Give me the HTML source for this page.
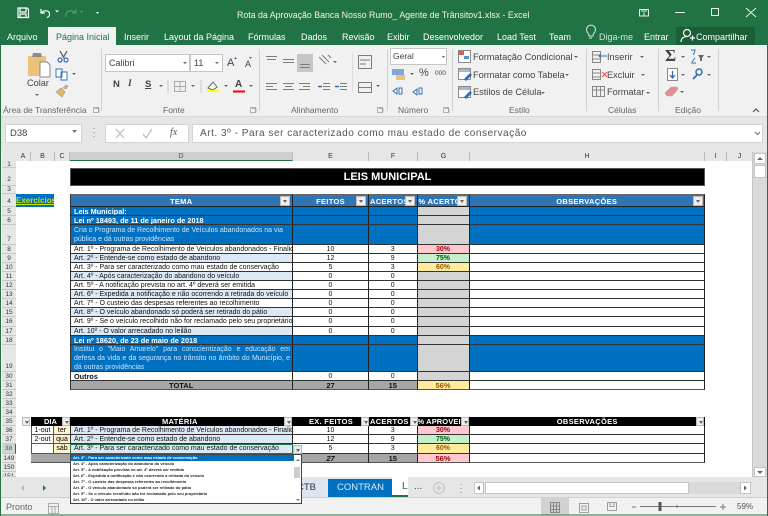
<!DOCTYPE html>
<html lang="pt"><head><meta charset="utf-8"><title>Excel</title>
<style>
*{box-sizing:border-box}
html,body{margin:0;padding:0}
body{width:768px;height:516px;overflow:hidden;background:#fff;font-family:"Liberation Sans",sans-serif;position:relative;filter:blur(.35px)}
div{position:absolute;white-space:nowrap}
.b{background:#f1f1f1}
.t{font-size:9px;color:#fff;top:29px;line-height:16px}
.rb{font-size:9.2px;color:#444;line-height:14px}
.gl{font-size:8.5px;color:#666;top:103px;line-height:14px}
.rh{left:2px;width:14px;background:#e6e6e6;border-bottom:1px solid #c8c8c8;font-size:6.5px;color:#333;text-align:center;overflow:hidden}
.ch{top:152px;height:9px;background:#e6e6e6;border-right:1px solid #bbb;font-size:7px;line-height:10px;color:#333;text-align:center}
.r{left:70px;width:635px}
.r>div{top:0;height:100%;border-right:1px solid #222;border-bottom:1px solid #333;font-size:7px;color:#111;overflow:hidden;text-align:center;line-height:9px}
.d{left:0;width:223px;border-left:1px solid #333;text-align:left!important;padding-left:3px}
.e{left:223px;width:76px}
.f{left:299px;width:48.5px}
.g{left:347.5px;width:52px;background:#d4d4d4}
.h{left:399.5px;width:235.5px}
.bl>div{background:#0070c0;color:#fff}
.bl>.g{background:#d4d4d4}
.bo{font-weight:bold;font-size:7.3px!important}
.lt{background:#dce9f5}
.hd>div{background:#2e75b6;color:#fff;font-weight:bold;font-size:7.5px;line-height:13px;letter-spacing:.3px;border-top:1px solid #666;border-bottom:1px solid #222}
.k>div{background:#000;color:#fff;font-weight:bold;font-size:7.5px;line-height:10px;letter-spacing:.3px;border:0}
.fb{width:8px;height:9px;background:#eee;border:1px solid #bbb}
.fb:after{content:"";position:absolute;left:1.5px;top:2.5px;border:2px solid transparent;border-top:3px solid #666}
.pk{background:#ffc7ce!important;color:#9c0006!important;font-weight:bold}
.gr{background:#c6efce!important;color:#006100!important;font-weight:bold}
.yl{background:#ffeb9c!important;color:#9c5700!important;font-weight:bold}
.to>div{background:#a6a6a6;font-weight:bold;font-size:7.5px;line-height:9px;border-bottom:1px solid #555}
.wh{background:#fff!important}
.li{left:73px;font-size:4px;font-weight:bold;color:#222;line-height:6px;height:6px}
</style></head><body>
<div style="left:0;top:0;width:768px;height:27px;background:#217346"></div>
<div style="left:0;top:27px;width:768px;height:18px;background:#217346"></div>
<div class="t" style="left:237px;top:7px;font-size:8.8px;color:#f2f2f2">Rota da Aprovação Banca Nosso Rumo_ Agente de Trânsitov1.xlsx - Excel</div>
<div style="left:48px;top:27px;width:68px;height:19px;background:#f1f1f1"></div>
<div class="t" style="left:7px">Arquivo</div>
<div class="t" style="left:56px;color:#217346">Página Inicial</div>
<div class="t" style="left:124px">Inserir</div>
<div class="t" style="left:164px">Layout da Página</div>
<div class="t" style="left:248px">Fórmulas</div>
<div class="t" style="left:301px">Dados</div>
<div class="t" style="left:342px">Revisão</div>
<div class="t" style="left:387px">Exibir</div>
<div class="t" style="left:423px">Desenvolvedor</div>
<div class="t" style="left:497px">Load Test</div>
<div class="t" style="left:549px">Team</div>
<div class="t" style="left:599px;color:#cfe3d7">Diga-me</div>
<div class="t" style="left:644px">Entrar</div>
<div style="left:676px;top:27px;width:79px;height:18px;background:#1b5e38"></div>
<div class="t" style="left:696px">Compartilhar</div>

<div class="b" style="left:1px;top:45px;width:766px;height:71px"></div>
<div style="left:1px;top:116px;width:766px;height:36px;background:#e6e6e6"></div>
<div style="left:1px;top:116px;width:766px;height:1px;background:#d8d8d8"></div>

<div style="left:105px;top:54px;width:85px;height:18px;background:#fff;border:1px solid #c6c6c6;font-size:9px;color:#444;line-height:16px;padding-left:3px">Calibri</div>
<div style="left:190px;top:54px;width:33px;height:18px;background:#fff;border:1px solid #c6c6c6;font-size:9px;color:#444;line-height:16px;padding-left:3px">11</div>
<div style="left:297px;top:54px;width:16px;height:18px;background:#c6c6c6"></div>
<div style="left:390px;top:48px;width:57px;height:17px;background:#fff;border:1px solid #c6c6c6;font-size:8.5px;color:#444;line-height:15px;padding-left:2px">Geral</div>
<div class="rb" style="left:27px;top:76px">Colar</div>
<div style="left:113px;top:79px;font-size:9.5px;font-weight:bold;color:#444">N</div>
<div style="left:128px;top:79px;font-size:9.5px;font-style:italic;font-family:'Liberation Serif',serif;font-weight:bold;color:#444">I</div>
<div style="left:145px;top:79px;font-size:9.5px;font-weight:bold;color:#444;text-decoration:underline">S</div>
<div style="left:227px;top:57px;font-size:11px;color:#444">A</div>
<div style="left:245px;top:59px;font-size:9px;color:#444">A</div>
<div style="left:235px;top:79px;font-size:10px;font-weight:bold;color:#444">A</div>
<div style="left:419px;top:67px;font-size:11px;color:#444">%</div>
<div style="left:435px;top:70px;font-size:6.5px;color:#444">000</div>
<div class="rb" style="left:473px;top:50px">Formatação Condicional</div>
<div class="rb" style="left:473px;top:68px">Formatar como Tabela</div>
<div class="rb" style="left:473px;top:85px">Estilos de Célula</div>
<div class="rb" style="left:607px;top:50px">Inserir</div>
<div class="rb" style="left:607px;top:68px">Excluir</div>
<div class="rb" style="left:607px;top:85px">Formatar</div>
<div style="left:665px;top:46px;font-size:17px;color:#444;font-family:'Liberation Serif',serif;font-weight:bold;line-height:20px">Σ</div>
<div class="gl" style="left:3px">Área de Transferência</div>
<div class="gl" style="left:163px">Fonte</div>
<div class="gl" style="left:291px">Alinhamento</div>
<div class="gl" style="left:398px">Número</div>
<div class="gl" style="left:509px">Estilo</div>
<div class="gl" style="left:608px">Células</div>
<div class="gl" style="left:675px">Edição</div>

<div style="left:5px;top:124px;width:77px;height:19px;background:#fff;border:1px solid #d4d4d4;font-size:9.5px;line-height:17px;padding-left:4px;color:#444">D38</div>
<div style="left:105px;top:124px;width:84px;height:19px;background:#fff;border:1px solid #d4d4d4"></div>
<div style="left:170px;top:125px;font-size:10px;font-family:'Liberation Serif',serif;font-style:italic;line-height:16px;color:#555">fx</div>
<div style="left:192px;top:124px;width:571px;height:19px;background:#fff;border:1px solid #d4d4d4;font-size:10.1px;letter-spacing:.5px;line-height:17px;padding-left:7px;color:#555">Art. 3º - Para ser caracterizado como mau estado de conservação</div>

<div style="left:2px;top:152px;width:14px;height:9px;background:#e6e6e6"></div>
<div class="ch" style="left:16px;width:15px">A</div>
<div class="ch" style="left:31px;width:24px">B</div>
<div class="ch" style="left:55px;width:15px">C</div>
<div class="ch" style="left:70px;width:223px;background:#cfcfcf;border-bottom:1px solid #217346;color:#217346">D</div>
<div class="ch" style="left:293px;width:76px">E</div>
<div class="ch" style="left:369px;width:49px">F</div>
<div class="ch" style="left:418px;width:52px">G</div>
<div class="ch" style="left:470px;width:235px">H</div>
<div class="ch" style="left:705px;width:22px">I</div>
<div class="ch" style="left:727px;width:26px">J</div>

<div class="rh" style="top:161px;height:7px;line-height:7px">1</div>
<div class="rh" style="top:168px;height:18px;line-height:24px">2</div>
<div class="rh" style="top:186px;height:8px;line-height:8px">3</div>
<div class="rh" style="top:194px;height:13px;line-height:16px">4</div>
<div class="rh" style="top:207px;height:9px;line-height:9px">5</div>
<div class="rh" style="top:216px;height:9px;line-height:9px">6</div>
<div class="rh" style="top:225px;height:20px;line-height:30px">7</div>
<div class="rh" style="top:245px;height:9px;line-height:9px">8</div>
<div class="rh" style="top:254px;height:9px;line-height:9px">9</div>
<div class="rh" style="top:263px;height:9px;line-height:9px">10</div>
<div class="rh" style="top:272px;height:9px;line-height:9px">11</div>
<div class="rh" style="top:281px;height:9px;line-height:9px">12</div>
<div class="rh" style="top:290px;height:9px;line-height:9px">13</div>
<div class="rh" style="top:299px;height:9px;line-height:9px">14</div>
<div class="rh" style="top:308px;height:9px;line-height:9px">15</div>
<div class="rh" style="top:317px;height:10px;line-height:10px">16</div>
<div class="rh" style="top:327px;height:9px;line-height:9px">17</div>
<div class="rh" style="top:336px;height:9px;line-height:9px">18</div>
<div class="rh" style="top:345px;height:27px;line-height:44px">19</div>
<div class="rh" style="top:372px;height:9px;line-height:9px">30</div>
<div class="rh" style="top:381px;height:9px;line-height:9px">31</div>
<div class="rh" style="top:390px;height:9px;line-height:9px">32</div>
<div class="rh" style="top:399px;height:9px;line-height:9px">33</div>
<div class="rh" style="top:408px;height:9px;line-height:9px">34</div>
<div class="rh" style="top:417px;height:9px;line-height:9px">35</div>
<div class="rh" style="top:426px;height:9px;line-height:9px">36</div>
<div class="rh" style="top:435px;height:9px;line-height:9px">37</div>
<div class="rh" style="top:444px;height:10px;line-height:10px;background:#cfd6d2;color:#217346;border-right:1px solid #217346">38</div>
<div class="rh" style="top:454px;height:9px;line-height:9px">149</div>
<div class="rh" style="top:463px;height:9px;line-height:9px">150</div>
<div class="rh" style="top:472px;height:5px;line-height:9px">151</div>

<div style="left:70px;top:168px;width:635px;height:18px;background:#000;border:1px solid #555;color:#fff;font-weight:bold;font-size:11px;line-height:16px;text-align:center">LEIS MUNICIPAL</div>
<div style="left:16px;top:194px;width:38px;height:13px;background:#0070c0;color:#c8e000;font-weight:bold;font-size:8px;line-height:13px;text-decoration:underline;overflow:hidden">Exercícios</div>

<div class="r hd" style="top:194px;height:13px"><div class="d" style="padding:0"><span style="position:absolute;left:99px">TEMA</span></div><div class="e">FEITOS</div><div class="f" style="text-align:left;padding-left:1px">ACERTOS</div><div class="g" style="background:#2e75b6;text-align:left;padding-left:1px">% ACERTOS</div><div class="h">OBSERVAÇÕES</div></div>
<div class="fb" style="left:280px;top:196px;height:10px;width:10px"></div>
<div class="fb" style="left:356px;top:196px;height:10px;width:10px"></div>
<div class="fb" style="left:405px;top:196px;height:10px;width:10px"></div>
<div class="fb" style="left:457px;top:196px;height:10px;width:10px"></div>
<div class="fb" style="left:693px;top:196px;height:10px;width:10px"></div>

<div class="r bl" style="top:207px;height:9px"><div class="d bo">Leis Municipal:</div><div class="e"></div><div class="f"></div><div class="g"></div><div class="h"></div></div>
<div class="r bl" style="top:216px;height:9px"><div class="d bo">Lei nº 18493, de 11 de janeiro de 2018</div><div class="e"></div><div class="f"></div><div class="g"></div><div class="h"></div></div>
<div class="r bl" style="top:225px;height:20px"><div class="d" style="padding-top:1px;color:#cfe4f7">Cria o Programa de Recolhimento de Veículos abandonados na via<br>pública e dá outras providências</div><div class="e"></div><div class="f"></div><div class="g"></div><div class="h"></div></div>
<div class="r" style="top:245px;height:9px"><div class="d wh">Art. 1º - Programa de Recolhimento de Veículos abandonados - Finalidade</div><div class="e">10</div><div class="f">3</div><div class="g pk">30%</div><div class="h"></div></div>
<div class="r" style="top:254px;height:9px"><div class="d lt">Art. 2º - Entende-se como estado de abandono</div><div class="e">12</div><div class="f">9</div><div class="g gr">75%</div><div class="h"></div></div>
<div class="r" style="top:263px;height:9px"><div class="d">Art. 3º - Para ser caracterizado como mau estado de conservação</div><div class="e">5</div><div class="f">3</div><div class="g yl">60%</div><div class="h"></div></div>
<div class="r" style="top:272px;height:9px"><div class="d lt">Art. 4º - Após caracterização do abandono do veículo</div><div class="e">0</div><div class="f">0</div><div class="g"></div><div class="h"></div></div>
<div class="r" style="top:281px;height:9px"><div class="d">Art. 5º - A notificação prevista no art. 4º deverá ser emitida</div><div class="e">0</div><div class="f">0</div><div class="g"></div><div class="h"></div></div>
<div class="r" style="top:290px;height:9px"><div class="d lt">Art. 6º - Expedida a notificação e não ocorrendo a retirada do veículo</div><div class="e">0</div><div class="f">0</div><div class="g"></div><div class="h"></div></div>
<div class="r" style="top:299px;height:9px"><div class="d">Art. 7º - O custeio das despesas referentes ao recolhimento</div><div class="e">0</div><div class="f">0</div><div class="g"></div><div class="h"></div></div>
<div class="r" style="top:308px;height:9px"><div class="d lt">Art. 8º - O veículo abandonado só poderá ser retirado do pátio</div><div class="e">0</div><div class="f">0</div><div class="g"></div><div class="h"></div></div>
<div class="r" style="top:317px;height:10px"><div class="d">Art. 9º - Se o veículo recolhido não for reclamado pelo seu proprietário</div><div class="e">0</div><div class="f">0</div><div class="g"></div><div class="h"></div></div>
<div class="r" style="top:327px;height:9px"><div class="d lt">Art. 10º - O valor arrecadado no leilão</div><div class="e">0</div><div class="f">0</div><div class="g"></div><div class="h"></div></div>
<div class="r bl" style="top:336px;height:9px"><div class="d bo">Lei nº 18620, de 23 de maio de 2018</div><div class="e"></div><div class="f"></div><div class="g"></div><div class="h"></div></div>
<div class="r bl" style="top:345px;height:27px"><div class="d" style="color:#cfe4f7"><span style="position:absolute;left:3px;top:0;width:216px;display:block;white-space:normal;text-align:justify">Institui o "Maio Amarelo" para conscientização e educação em defesa da vida e da segurança no trânsito no âmbito do Município, e dá outras providências</span></div><div class="e"></div><div class="f"></div><div class="g"></div><div class="h"></div></div>
<div class="r" style="top:372px;height:9px"><div class="d bo">Outros</div><div class="e">0</div><div class="f">0</div><div class="g"></div><div class="h"></div></div>
<div class="r to" style="top:381px;height:9px"><div class="d" style="padding:0"><span style="position:absolute;left:98px">TOTAL</span></div><div class="e">27</div><div class="f">15</div><div class="g yl">56%</div><div class="h wh"></div></div>

<div class="fb" style="left:22px;top:417px"></div>
<div style="left:31px;top:417px;width:39px;height:9px;background:#000;color:#fff;font-weight:bold;font-size:7.5px;line-height:10px;padding-left:13px">DIA</div>
<div class="r k" style="top:417px;height:9px"><div class="d" style="padding:0"><span style="position:absolute;left:92px">MATÉRIA</span></div><div class="e">EX. FEITOS</div><div class="f" style="text-align:left;padding-left:1px">ACERTOS</div><div class="g" style="background:#000;text-align:left;padding-left:0;letter-spacing:.1px">% APROVEI</div><div class="h">OBSERVAÇÕES</div></div>
<div class="fb" style="left:62px;top:417px"></div>
<div class="fb" style="left:284px;top:417px"></div>
<div class="fb" style="left:361px;top:417px"></div>
<div class="fb" style="left:410px;top:417px"></div>
<div class="fb" style="left:461px;top:417px"></div>
<div class="fb" style="left:696px;top:417px"></div>

<div style="left:31px;top:426px;width:23px;height:9px;border:1px solid #555;border-top:0;font-size:7px;line-height:9px;text-align:center">1-out</div>
<div style="left:54px;top:426px;width:16px;height:9px;background:#fff2cc;border-bottom:1px solid #555;font-size:7px;line-height:9px;text-align:center;overflow:hidden">ter</div>
<div style="left:31px;top:435px;width:23px;height:9px;border:1px solid #555;border-top:0;font-size:7px;line-height:9px;text-align:center">2-out</div>
<div style="left:54px;top:435px;width:16px;height:9px;background:#fff2cc;border-bottom:1px solid #555;font-size:7px;line-height:9px;text-align:center;overflow:hidden">qua</div>
<div style="left:31px;top:444px;width:23px;height:10px;border:1px solid #555;border-top:0"></div>
<div style="left:54px;top:444px;width:16px;height:10px;background:#fff2cc;border-bottom:1px solid #555;font-size:7px;line-height:10px;text-align:center;overflow:hidden">sáb</div>
<div style="left:31px;top:454px;width:39px;height:9px;background:#a6a6a6;border-bottom:1px solid #555"></div>

<div class="r" style="top:426px;height:9px"><div class="d lt">Art. 1º - Programa de Recolhimento de Veículos abandonados - Finalidade</div><div class="e">10</div><div class="f">3</div><div class="g pk">30%</div><div class="h"></div></div>
<div class="r" style="top:435px;height:9px"><div class="d lt">Art. 2º - Entende-se como estado de abandono</div><div class="e">12</div><div class="f">9</div><div class="g gr">75%</div><div class="h"></div></div>
<div class="r" style="top:444px;height:10px"><div class="d lt">Art. 3º - Para ser caracterizado como mau estado de conservação</div><div class="e">5</div><div class="f">3</div><div class="g yl">60%</div><div class="h"></div></div>
<div class="r to" style="top:454px;height:9px"><div class="d"></div><div class="e"><i>27</i></div><div class="f">15</div><div class="g pk">56%</div><div class="h wh"></div></div>
<div style="left:70px;top:444px;width:223px;height:10px;border:1px solid #217346"></div>

<div style="left:0;top:477px;width:768px;height:20px;background:#e6e6e6"></div>
<div style="left:0;top:497px;width:768px;height:19px;background:#f1f1f1;border-top:1px solid #d0d0d0"></div>
<div style="left:293px;top:479px;width:33px;height:18px;background:#dce6f1;color:#333;font-size:9.5px;line-height:17px;padding-left:4px">CTB</div>
<div style="left:328px;top:479px;width:64px;height:18px;background:#0070c0;color:#dcebf7;font-size:9.5px;line-height:17px;padding-left:9px">CONTRAN</div>
<div style="left:392px;top:477px;width:16px;height:20px;background:#fff;border-bottom:2px solid #217346;color:#217346;font-size:10.5px;line-height:19px;padding-left:10px;overflow:hidden">L</div>
<div style="left:414px;top:481px;font-size:10px;color:#444;line-height:12px">...</div>
<div style="left:474px;top:482px;width:10px;height:12px;background:#fff;border:1px solid #c4c4c4"></div>
<div style="left:485px;top:482px;width:204px;height:12px;background:#fff;border:1px solid #c4c4c4"></div>
<div style="left:689px;top:482px;width:51px;height:12px;background:#d9d9d9"></div>
<div style="left:740px;top:482px;width:11px;height:12px;background:#fff;border:1px solid #c4c4c4"></div>
<div style="left:6px;top:500px;font-size:9px;color:#666;line-height:14px">Pronto</div>
<div style="left:541px;top:497px;width:28px;height:18px;background:#d2d2d2"></div>
<div style="left:737px;top:500px;font-size:8px;color:#555;line-height:14px">59%</div>

<div style="left:752px;top:152px;width:15px;height:325px;background:#dadada;border-left:1px solid #c4c4c4"></div>
<div style="left:754px;top:153px;width:12px;height:11px;background:#fff;border:1px solid #c4c4c4"></div>
<div style="left:754px;top:165px;width:12px;height:13px;background:#fff;border:1px solid #c4c4c4"></div>
<div style="left:754px;top:467px;width:12px;height:10px;background:#fff;border:1px solid #c4c4c4"></div>

<div style="left:70px;top:454px;width:232px;height:50px;background:#fff;border:1px solid #444"></div>
<div style="left:71px;top:455px;width:223px;height:5.5px;background:#0070c0"></div>
<div class="li" style="top:454.5px;color:#fff">Art. 3º - Para ser caracterizado como mau estado de conservação</div>
<div class="li" style="top:460.5px">Art. 4º - Após caracterização do abandono do veículo</div>
<div class="li" style="top:466.8px">Art. 5º - A notificação prevista no art. 4º deverá ser emitida</div>
<div class="li" style="top:472.8px">Art. 6º - Expedida a notificação e não ocorrendo a retirada do veículo</div>
<div class="li" style="top:479px">Art. 7º - O custeio das despesas referentes ao recolhimento</div>
<div class="li" style="top:485px">Art. 8º - O veículo abandonado só poderá ser retirado do pátio</div>
<div class="li" style="top:491.2px">Art. 9º - Se o veículo recolhido não for reclamado pelo seu proprietário</div>
<div class="li" style="top:497.3px">Art. 10º - O valor arrecadado no leilão</div>
<div style="left:294px;top:467px;width:6px;height:11px;background:#cdcdcd"></div>
<div class="fb" style="left:293px;top:445px;height:9px;width:9px;background:#e8e8e8"></div>

<svg width="768" height="516" viewBox="0 0 768 516" style="position:absolute;left:0;top:0" fill="none">
<g stroke="#fff" stroke-width="1.2">
<path d="M18 8h9l1.500 1.500V17.500H18zM20 8v4h6V8M20 17.500v-3.500h6v3.500"/>
<path d="M41 9v4h4M41.500 13C43 10 49 10 49.500 13.500c.3 2-1 3.500-2.500 4"/>
</g>
<path d="M66 17c-1-4 2-7 6-6l3 1M76 9v4h-4" stroke="#5e9c7b" stroke-width="1.100"/>
<path d="M55 10.500h4l-2 2zM96 12h3l-1.500 2zM95.500 10h4" fill="#fff"/>
<path d="M80 11h3l-1.500 2z" fill="#5e9c7b"/>
<path d="M639.500 9.500h9v6.500h-9zM641 11h6M644 15.500v-3M675 12.500h10M711.500 8.500h7v7h-7zM746 8l10 9M756 8l-10 9" stroke="#e8f0ea"/>
<path d="M588 33a4.500 4.500 0 1 1 6 0c-.8 .8-1 1.500-1 3h-4c0-1.500-.2-2.200-1-3zM589 38h3" stroke="#d8e8de"/>
<circle cx="687" cy="33" r="3.500" stroke="#fff" stroke-width="1.200"/>
<path d="M681 42c0-4 3-5.500 6-5.500M690 38h5M692.500 35.500v5" stroke="#fff" stroke-width="1.200"/>

<path d="M28 56h18v20H28z" fill="#eac27c"/>
<path d="M33 53h8l1 4H32z" fill="#8c8c8c"/>
<path d="M40 62h7l3 3v12H40z" fill="#fff" stroke="#888"/>
<path d="M35 94h4l-2 2z" fill="#666"/>
<circle cx="60" cy="60" r="2" stroke="#2f6db5" stroke-width="1.200"/>
<circle cx="66" cy="60" r="2" stroke="#2f6db5" stroke-width="1.200"/>
<path d="M60 51l4 7M67 51l-4 7" stroke="#666" stroke-width="1.300"/>
<path d="M56 69h6v8h-6zM61 72h6v8h-6z" fill="#fff" stroke="#2f6db5" stroke-width=".9"/>
<path d="M72 73h4l-2 2z" fill="#666"/>
<path d="M56 92l5-4 4 4-3 5zM63 88l3-3 2 1-2 3z" fill="#e3b266" stroke="#999" stroke-width=".6"/>

<path d="M183 62h4l-2 2zM215 62h4l-2 2zM159 85h4l-2 2zM191 85h4l-2 2zM224 85h4l-2 2zM249 85h4l-2 2zM333 61h4l-2 2zM376 85h4l-2 2zM442 56h3l-1.500 2zM410 73h4l-2 2zM574 56h4l-2 2zM565 74h4l-2 2zM541 92h4l-2 2zM640 56h4l-2 2zM641 74h4l-2 2zM646 92h4l-2 2zM681 56h4l-2 2zM707 56h4l-2 2zM681 74h4l-2 2zM707 74h4l-2 2zM680 91h4l-2 2z" fill="#666"/>
<path d="M234 59l1.500-2 1.500 2zM252 57l-1.500 2-1.500-2z" fill="#2f6db5"/>
<path d="M174.500 81.500h11v10h-11zM180 81.500v10M174.500 86.500h11" stroke="#aaa"/>
<path d="M168 80v13M201 80v13" stroke="#ccc"/>
<path d="M208 88l5-6 4 5-4 3z" fill="#fff" stroke="#666"/>
<path d="M207 90h12v2h-12z" fill="#ffff00"/>
<path d="M233 90.500h12v2h-12z" fill="#f00"/>
<g stroke="#7d7d7d" stroke-width="1">
<path d="M266 56.500h11M267 59.500h9M283 59.500h11M283 62.500h11M300 64.500h10M300 67.500h10"/>
<path d="M266 83.500h11M266 86.500h7M266 89.500h11M283 83.500h11M285 86.500h7M283 89.500h11M299 83.500h11M303 86.500h7M299 89.500h11"/>
<path d="M323 83.500h7M323 86.500h7M323 89.500h7M340 83.500h7M340 86.500h7M340 89.500h7"/>
<path d="M319 57l7 7M322 55l7 7M328 55l3 3"/>
<path d="M358.500 55.500h13v13h-13zM358.500 82.500h13v10h-13zM358.500 87.500h13M360 60h10M360 64h6"/>
</g>
<path d="M318 86.500h4M335 86.500h4" stroke="#2f6db5" stroke-width="1.500"/>
<path d="M101.500 49v62M259.500 49v62M387.500 49v62M452.500 49v62M586.500 49v62M658.500 49v62M718.500 49v62" stroke="#d2d2d2"/>
<path d="M352.500 53v40" stroke="#dcdcdc"/>
<path d="M392 69h12v6h-12z" fill="#7fa8d4"/><path d="M396 75h9v5h-9z" fill="#eac27c"/>
<path d="M393 91l4-3v6zM399 88h3v6h-3zM413 92l4-3v6zM419 88h3v6h-3z" stroke="#2f6db5" stroke-width=".9"/>
<path d="M458.500 50.500h12v12h-12z" fill="#fff" stroke="#888"/>
<path d="M459 51h5v4h-5z" fill="#e05a4e"/><path d="M464 56h5v3h-5z" fill="#5b8fcb"/>
<path d="M458.500 68.500h12v11h-12zM458.500 86.500h12v11h-12z" fill="#fff" stroke="#888"/>
<path d="M459 69h11v3h-11zM459 87h11v3h-11z" fill="#9db8d8"/>
<path d="M464 79l6-6 2 2-6 6zM464 97l6-6 2 2-6 6z" fill="#2f6db5"/>
<path d="M592.500 51.500h8v11h-8zM592.500 55h8M592.500 59h8M592.500 69.500h8v10h-8zM592.500 73h8M592.500 77h8M592.500 86.500h12v10h-12zM592.500 90h12M596.500 86.500v10M600.500 86.500v10" stroke="#888"/>
<path d="M601 56h6M601 54l-2 2 2 2" stroke="#2f6db5"/><path d="M602 72l5 5M607 72l-5 5" stroke="#d9534f"/>
<path d="M667.500 68.500h10v12h-10z" fill="#fff" stroke="#888"/><path d="M672.500 71v6M670 75l2.500 3 2.500-3" stroke="#2f6db5" stroke-width="1.300"/>
<path d="M665 93l6-6h6l1 2-6 7h-5z" fill="#e88a94" stroke="#aaa" stroke-width=".6"/>
<path d="M691 50h4l-1.500 5M691 63h5M692 62l3-4" stroke="#2f6db5"/>
<path d="M698 55h6l-2 3v3h-2v-3z" fill="#666"/>
<circle cx="699" cy="72" r="3" stroke="#2f6db5" stroke-width="1.500"/><path d="M697 75l-4 4" stroke="#2f6db5" stroke-width="1.700"/>
<path d="M95 108.500h4v4M93.500 107.500h5v5h-5zM252 108.500h4v4M250.500 107.500h5v5h-5zM379 108.500h4v4M377.500 107.500h5v5h-5zM445 108.500h4v4M443.500 107.500h5v5h-5z" stroke="#999" stroke-width=".7"/>
<path d="M753 112l3-3 3 3" stroke="#555" stroke-width="1.200"/>

<path d="M72 130h5l-2.500 3z" fill="#777"/>
<path d="M94 128v1M94 132v1M94 136v1" stroke="#aaa" stroke-width="1.500"/>
<path d="M116 129l8 9M124 129l-8 9" stroke="#bbb" stroke-width="1.200"/>
<path d="M143 134l3 4 6-9" stroke="#bbb" stroke-width="1.200"/>
<path d="M755 132l2.500 2.500 2.500-2.500" stroke="#777" stroke-width="1.200"/>
<path d="M757 160l3-3 3 3zM757 471l3 3 3-3z" fill="#666"/>
<path d="M296 461l2-2 2 2zM296 499l2 2 2-2z" fill="#777"/>

<path d="M24 485l-3 3 3 3z" fill="#bbb"/>
<path d="M43 485l3 3-3 3z" fill="#217346"/>
<circle cx="439" cy="488" r="5.500" stroke="#c4c4c4"/><path d="M436 488h6M439 485v6" stroke="#c4c4c4"/>
<path d="M461 484v1M461 488v1M461 492v1" stroke="#aaa" stroke-width="1.500"/>
<path d="M480 485.500v5l-3-2.500zM744 485.500v5l3-2.500z" fill="#666"/>
<path d="M48.500 503.500h10v10h-10zM48.500 506.500h10M52 506.500v7M55 506.500v7" stroke="#999" stroke-width=".8"/>
<path d="M550.500 502.500h9v10h-9zM550.500 506h9M550.500 509.500h9M553.500 502.500v10M556.500 502.500v10" stroke="#777" stroke-width=".8"/>
<path d="M579.500 503.500h9v9h-9zM582 506h4v4h-4z" stroke="#888" stroke-width=".8"/>
<path d="M607.500 502.500h9v8h-9zM610 502.500v4h4v-4" stroke="#888" stroke-width=".8"/>
<path d="M632 507h4M640 506.500h76M720 507h6M723 504v6M677 505v3" stroke="#777"/>
<path d="M658.500 502h3v9h-3z" fill="#555"/>
<path d="M.5 0v516M767.500 45v471M0 515h768" stroke="#217346"/>
</svg>
</body></html>
